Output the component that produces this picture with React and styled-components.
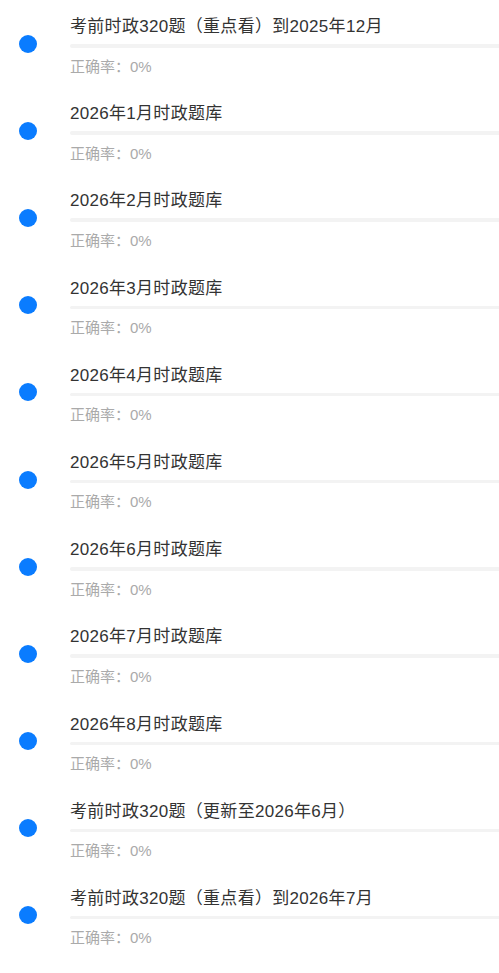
import React from "react";
import styled, { createGlobalStyle } from "styled-components";

const GlobalStyle = createGlobalStyle`
  body {
    margin: 0;
    background: #fff;
    font-family: "Liberation Sans", "Noto Sans CJK SC", sans-serif;
  }
`;

const List = styled.div`
  display: flex;
  flex-direction: column;
`;

const Row = styled.div`
  height: 87.2px;
  box-sizing: border-box;
  display: flex;
  align-items: flex-start;
`;

const DotCell = styled.div`
  width: 70px;
  flex-shrink: 0;
  align-self: center;
  display: flex;
  align-items: center;
  padding-left: 19px;
  box-sizing: border-box;
`;

const Dot = styled.div`
  width: 18px;
  height: 18px;
  border-radius: 50%;
  background: #0a7cff;
`;

const Body = styled.div`
  flex: 1;
  display: flex;
  flex-direction: column;
  padding-top: 16px;
`;

const Title = styled.div`
  font-size: 17px;
  line-height: 22px;
  letter-spacing: 0.3px;
  color: #333;
  white-space: nowrap;
`;

const Bar = styled.div`
  margin-top: 6px;
  height: 3.5px;
  background: #f3f3f3;
  border-radius: 2px 0 0 2px;
`;

const Rate = styled.div`
  margin-top: 9px;
  font-size: 15px;
  line-height: 20px;
  color: #aaa;
`;

const items = [
  "考前时政320题（重点看）到2025年12月",
  "2026年1月时政题库",
  "2026年2月时政题库",
  "2026年3月时政题库",
  "2026年4月时政题库",
  "2026年5月时政题库",
  "2026年6月时政题库",
  "2026年7月时政题库",
  "2026年8月时政题库",
  "考前时政320题（更新至2026年6月）",
  "考前时政320题（重点看）到2026年7月",
];

export default function App() {
  return (
    <>
      <GlobalStyle />
      <List>
        {items.map((t) => (
          <Row key={t}>
            <DotCell>
              <Dot />
            </DotCell>
            <Body>
              <Title>{t}</Title>
              <Bar />
              <Rate>正确率：0%</Rate>
            </Body>
          </Row>
        ))}
      </List>
    </>
  );
}
